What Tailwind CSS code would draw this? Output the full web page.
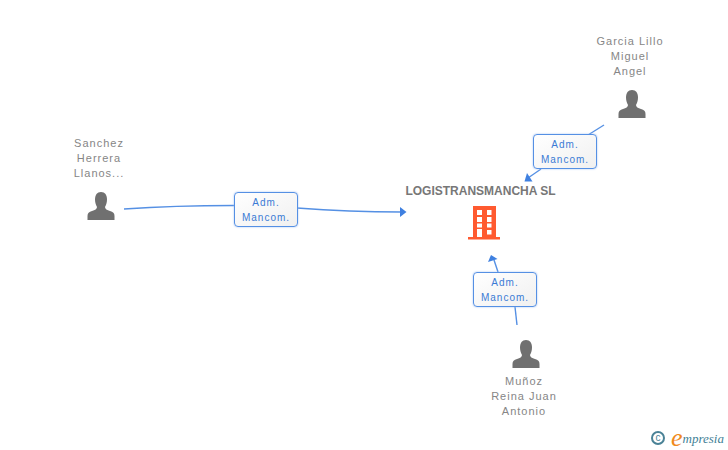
<!DOCTYPE html>
<html>
	<head>
		<title>LOGISTRANSMANCHA SL</title>
		<script src="https://cdn.jsdelivr.net/npm/@tailwindcss/browser@4"></script>
	</head>
	<body class="bg-white font-['Liberation_Sans',sans-serif]">
		<div class="relative w-[728px] h-[450px] overflow-hidden">
			<!-- Links -->
			<svg class="absolute left-0 top-0" width="728" height="450" fill="none" stroke="#5590e4" stroke-width="1.4">
				<path d="M124 209 C160 206.500 200 205.500 234 205.500" />
				<path d="M297 208 C330 210.500 365 212 401 212" />
				<path d="M406.500 212 L400 207 L400 217 Z" fill="#3f80e0" stroke="none" />
				<path d="M604 125 L588 135" />
				<path d="M541 169 L528 178" />
				<path d="M524.500 181.500 L527 173 L532.500 181.500 Z" fill="#3f80e0" stroke="none" />
				<path d="M517 325 L515 307" />
				<path d="M498 272 L494 260" />
				<path d="M491 255 L488 262 L497.500 259 Z" fill="#3f80e0" stroke="none" />
			</svg>

			<!-- Link labels -->
			<div class="absolute left-[533px] top-[134px] w-[64px] h-[35px] flex flex-col items-center justify-center rounded border border-[#5590e4] bg-gradient-to-br from-white to-[#f0f0f0] text-[10px] leading-[15px] tracking-[1px] text-[#3a7bd5] shadow-[0_0_2px_#9dbdf0]">
				<span>Adm.</span><span>Mancom.</span>
			</div>
			<div class="absolute left-[234px] top-[192px] w-[64px] h-[35px] flex flex-col items-center justify-center rounded border border-[#5590e4] bg-gradient-to-br from-white to-[#f0f0f0] text-[10px] leading-[15px] tracking-[1px] text-[#3a7bd5] shadow-[0_0_2px_#9dbdf0]">
				<span>Adm.</span><span>Mancom.</span>
			</div>
			<div class="absolute left-[473px] top-[272px] w-[64px] h-[35px] flex flex-col items-center justify-center rounded border border-[#5590e4] bg-gradient-to-br from-white to-[#f0f0f0] text-[10px] leading-[15px] tracking-[1px] text-[#3a7bd5] shadow-[0_0_2px_#9dbdf0]">
				<span>Adm.</span><span>Mancom.</span>
			</div>

			<!-- Garcia -->
			<div class="absolute left-[585px] top-[34px] w-[90px] flex flex-col items-center text-[11px] leading-[15px] tracking-[1px] text-[#868686]">
				<span>Garcia Lillo</span><span>Miguel</span><span>Angel</span>
				<svg class="mt-[11px] ml-[4px]" width="28" height="28" viewBox="0 0 28 28" fill="#707070">
					<path d="M14 0 C18 0 20 3 20 7.500 C20 10.500 19 13 18 15 C18 17 20 18 23 19 C26 20 27.500 21 27.500 24 L27.500 28 L0.500 28 L0.500 24 C0.500 21 2 20 5 19 C8 18 10 17 10 15 C9 13 8 10.500 8 7.500 C8 3 10 0 14 0 Z" />
				</svg>
			</div>

			<!-- Sanchez -->
			<div class="absolute left-[54px] top-[136px] w-[90px] flex flex-col items-center text-[11px] leading-[15px] tracking-[1px] text-[#868686]">
				<span>Sanchez</span><span>Herrera</span><span>Llanos...</span>
				<svg class="mt-[11px] ml-[4px]" width="28" height="28" viewBox="0 0 28 28" fill="#707070">
					<path d="M14 0 C18 0 20 3 20 7.500 C20 10.500 19 13 18 15 C18 17 20 18 23 19 C26 20 27.500 21 27.500 24 L27.500 28 L0.500 28 L0.500 24 C0.500 21 2 20 5 19 C8 18 10 17 10 15 C9 13 8 10.500 8 7.500 C8 3 10 0 14 0 Z" />
				</svg>
			</div>

			<!-- Munoz -->
			<div class="absolute left-[479px] top-[340px] w-[90px] flex flex-col items-center text-[11px] leading-[15px] tracking-[1px] text-[#868686]">
				<svg class="mb-[6px] ml-[4px]" width="28" height="28" viewBox="0 0 28 28" fill="#707070">
					<path d="M14 0 C18 0 20 3 20 7.500 C20 10.500 19 13 18 15 C18 17 20 18 23 19 C26 20 27.500 21 27.500 24 L27.500 28 L0.500 28 L0.500 24 C0.500 21 2 20 5 19 C8 18 10 17 10 15 C9 13 8 10.500 8 7.500 C8 3 10 0 14 0 Z" />
				</svg>
				<span>Muñoz</span><span>Reina Juan</span><span>Antonio</span>
			</div>

			<!-- Company -->
			<div class="absolute left-[390px] top-[184px] w-[181px] flex flex-col items-center">
				<span class="text-[12px] leading-[15px] font-bold text-[#777777] whitespace-nowrap">LOGISTRANSMANCHA SL</span>
				<svg class="mt-[7px] ml-[7px]" width="32" height="34" viewBox="0 0 32 34" fill="#ff5a30">
					<path fill-rule="evenodd" d="M5 0 H28 V31 H32 V33.500 H0 V31 H5 Z M9 4 V9 H14 V4 Z M19 4 V9 H23.500 V4 Z M9 11 V16 H14 V11 Z M19 11 V16 H23.500 V11 Z M9 17.500 V21.500 H14 V17.500 Z M19 17.500 V21.500 H23.500 V17.500 Z M9 23 V31 H14 V23 Z M19 24 V28.500 H23.500 V24 Z" />
				</svg>
			</div>

			<!-- Footer logo -->
			<div class="absolute left-[651px] top-[423px] flex items-center whitespace-nowrap">
				<span class="w-[14px] h-[14px] rounded-full border-2 border-[#4a8296] flex items-center justify-center text-[10px] leading-none text-[#4a8296]">c</span>
				<span class="ml-[6px] font-['Liberation_Serif',serif] italic text-[26px] leading-[30px] text-[#f08a1d]">e</span>
				<span class="font-['Liberation_Serif',serif] italic text-[13px] leading-[20px] mt-[1px] text-[#3f7f96]">mpresia</span>
			</div>
		</div>
	</body>
</html>
